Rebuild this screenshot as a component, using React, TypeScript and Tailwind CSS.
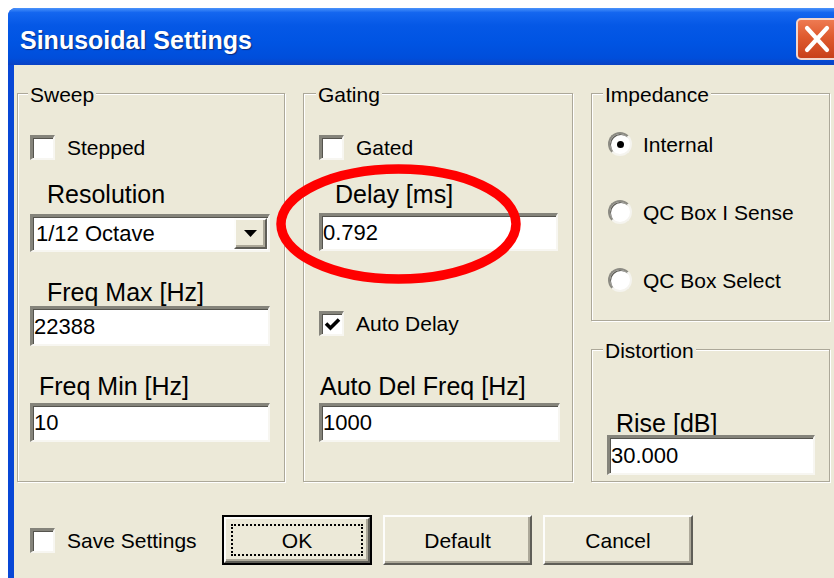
import type { ReactNode } from 'react'

// Classic Win32 look: sunken wells, raised buttons, etched group frames
const sunken =
  'bg-white border-t-[3px] border-l-[3px] border-r-2 border-b-2 border-t-[#85847b] border-l-[#85847b] border-r-[#f7f6f1] border-b-[#f7f6f1] shadow-[inset_1px_1px_0_#55544e]'
const raised =
  'bg-[#ece9d8] border-2 border-t-[#fdfdfb] border-l-[#fdfdfb] border-r-[#5f5e57] border-b-[#5f5e57] shadow-[inset_-2px_-2px_0_#aca899]'

function Checkbox({ checked = false }: { checked?: boolean }) {
  return (
    <span className={`w-[25px] h-[25px] shrink-0 flex items-center justify-center ${sunken}`}>
      {checked && (
        <svg width="17" height="14" viewBox="0 0 17 14">
          <path d="M2 6.5 L6.5 11 L15 2.5" fill="none" stroke="#000" strokeWidth="3.6" />
        </svg>
      )}
    </span>
  )
}

function CheckRow({ label, checked, className }: { label: string; checked?: boolean; className: string }) {
  return (
    <div className={`flex items-center gap-[12px] h-[25px] ${className}`}>
      <Checkbox checked={checked} />
      <span className="text-[21px] leading-none">{label}</span>
    </div>
  )
}

function Radio({ label, selected = false, className }: { label: string; selected?: boolean; className: string }) {
  return (
    <div className={`flex items-center gap-[11px] h-[24px] ${className}`}>
      <span className="w-[24px] h-[24px] rounded-full bg-white border-2 border-t-[#8c8b83] border-l-[#8c8b83] border-r-[#f5f4ef] border-b-[#f5f4ef] shadow-[inset_1px_1px_0_#5d5c56] flex items-center justify-center">
        {selected && <span className="w-[7px] h-[7px] rounded-full bg-black" />}
      </span>
      <span className="text-[21px] leading-none">{label}</span>
    </div>
  )
}

function Label({ children, className }: { children: ReactNode; className: string }) {
  return <div className={`text-[25px] leading-[26px] h-[26px] ${className}`}>{children}</div>
}

function Field({ value, className }: { value: string; className: string }) {
  return (
    <div className={`flex items-center pl-[1px] text-[22px] leading-none ${sunken} ${className}`}>{value}</div>
  )
}

function Group({ title, titleLeft, className, children }: { title: string; titleLeft: string; className: string; children: ReactNode }) {
  return (
    <div className={`relative flex flex-col border border-[#aca899] shadow-[inset_1px_1px_0_#fff,1px_1px_0_#fff] ${className}`}>
      <span className={`absolute top-[-11px] px-[2px] bg-[#ece9d8] text-[21px] leading-[24px] ${titleLeft}`}>{title}</span>
      {children}
    </div>
  )
}

function Button({ children, isDefault = false, className }: { children: ReactNode; isDefault?: boolean; className: string }) {
  if (isDefault) {
    return (
      <div className={`h-[50px] border-2 border-black flex ${className}`}>
        <div className={`flex-1 flex p-[5px] ${raised}`}>
          <div className="flex-1 border-2 border-dotted border-black flex items-center justify-center text-[21px] leading-none">
            {children}
          </div>
        </div>
      </div>
    )
  }
  return (
    <div className={`h-[50px] flex items-center justify-center text-[21px] leading-none ${raised} ${className}`}>
      {children}
    </div>
  )
}

export default function App() {
  return (
    <div className="relative w-[834px] h-[578px] overflow-hidden bg-white text-black font-['Liberation_Sans',Arial,sans-serif]">
      <div className="pt-[8px] pl-[8px]">
        <div className="w-[836px] h-[570px] flex flex-col rounded-tl-[8px] bg-[#0847d6]">
          {/* caption bar */}
          <div className="h-[57px] shrink-0 flex items-start justify-between pl-[12px] pr-[6px] rounded-tl-[8px] bg-[linear-gradient(180deg,#4b93fb_0%,#1466ef_8%,#0558e6_30%,#0054e3_60%,#004edb_88%,#0a42c4_100%)]">
            <span className="mt-[18px] text-white font-bold text-[25px] leading-[28px] [text-shadow:1px_1px_1px_#0b2a7a]">
              Sinusoidal Settings
            </span>
            <span className="mt-[10px] w-[42px] h-[42px] rounded-[5px] border-2 border-[#f2d6cc] bg-[linear-gradient(180deg,#ee7a52_0%,#df5a2e_45%,#c8401a_100%)] flex items-center justify-center">
              <svg width="26" height="28" viewBox="0 0 26 28">
                <path d="M3 3 L23 25 M23 3 L3 25" stroke="#fff" strokeWidth="4.2" strokeLinecap="round" />
              </svg>
            </span>
          </div>

          {/* dialog body */}
          <div className="flex-1 ml-[6px] bg-[#ece9d8] pl-[3px] pt-[28px]">
            <div className="flex gap-[18px]">
              <Group title="Sweep" titleLeft="left-[10px]" className="w-[268px] h-[389px]">
                <CheckRow label="Stepped" className="mt-[41px] ml-[12px]" />
                <Label className="mt-[21px] ml-[29px]">Resolution</Label>
                <div className={`mt-[7px] ml-[12px] w-[240px] h-[38px] flex items-center justify-between pr-[1px] ${sunken}`}>
                  <span className="pl-[3px] text-[22px] leading-none">1/12 Octave</span>
                  <span className={`w-[33px] h-[31px] flex items-center justify-center ${raised}`}>
                    <svg width="13" height="7" viewBox="0 0 13 7">
                      <path d="M0 0 H13 L6.5 7 Z" fill="#000" />
                    </svg>
                  </span>
                </div>
                <Label className="mt-[27px] ml-[29px]">Freq Max [Hz]</Label>
                <Field value="22388" className="mt-[1px] ml-[12px] w-[240px] h-[40px]" />
                <Label className="mt-[27px] ml-[21px]">Freq Min [Hz]</Label>
                <Field value="10" className="mt-[4px] ml-[12px] w-[240px] h-[39px]" />
              </Group>

              <Group title="Gating" titleLeft="left-[12px]" className="w-[270px] h-[389px]">
                <CheckRow label="Gated" className="mt-[41px] ml-[15px]" />
                <Label className="mt-[21px] ml-[31px]">Delay [ms]</Label>
                <Field value="0.792" className="mt-[6px] ml-[15px] w-[239px] h-[38px]" />
                <CheckRow label="Auto Delay" checked className="mt-[60px] ml-[15px]" />
                <Label className="mt-[37px] ml-[16px]">Auto Del Freq [Hz]</Label>
                <Field value="1000" className="mt-[4px] ml-[15px] w-[241px] h-[39px]" />
              </Group>

              <div className="w-[239px] flex flex-col gap-[28px]">
                <Group title="Impedance" titleLeft="left-[11px]" className="h-[228px]">
                  <Radio label="Internal" selected className="mt-[38px] ml-[16px]" />
                  <Radio label="QC Box I Sense" className="mt-[44px] ml-[16px]" />
                  <Radio label="QC Box Select" className="mt-[44px] ml-[16px]" />
                </Group>
                <Group title="Distortion" titleLeft="left-[11px]" className="h-[133px]">
                  <Label className="mt-[60px] ml-[24px]">Rise [dB]</Label>
                  <Field value="30.000" className="mt-[-1px] ml-[15px] w-[208px] h-[40px]" />
                </Group>
              </div>
            </div>

            {/* footer row */}
            <div className="mt-[33px] pl-[13px] h-[50px] flex items-center">
              <CheckRow label="Save Settings" className="w-[192px]" />
              <Button isDefault className="w-[150px]">OK</Button>
              <Button className="ml-[11px] w-[149px]">Default</Button>
              <Button className="ml-[11px] w-[150px]">Cancel</Button>
            </div>
          </div>
        </div>
      </div>

      {/* hand-drawn highlight around the delay field */}
      <svg className="absolute left-0 top-0 pointer-events-none" width="834" height="578">
        <ellipse cx="398.5" cy="224" rx="117.5" ry="55" fill="none" stroke="#ff0000" strokeWidth="9.5" />
      </svg>
    </div>
  )
}
